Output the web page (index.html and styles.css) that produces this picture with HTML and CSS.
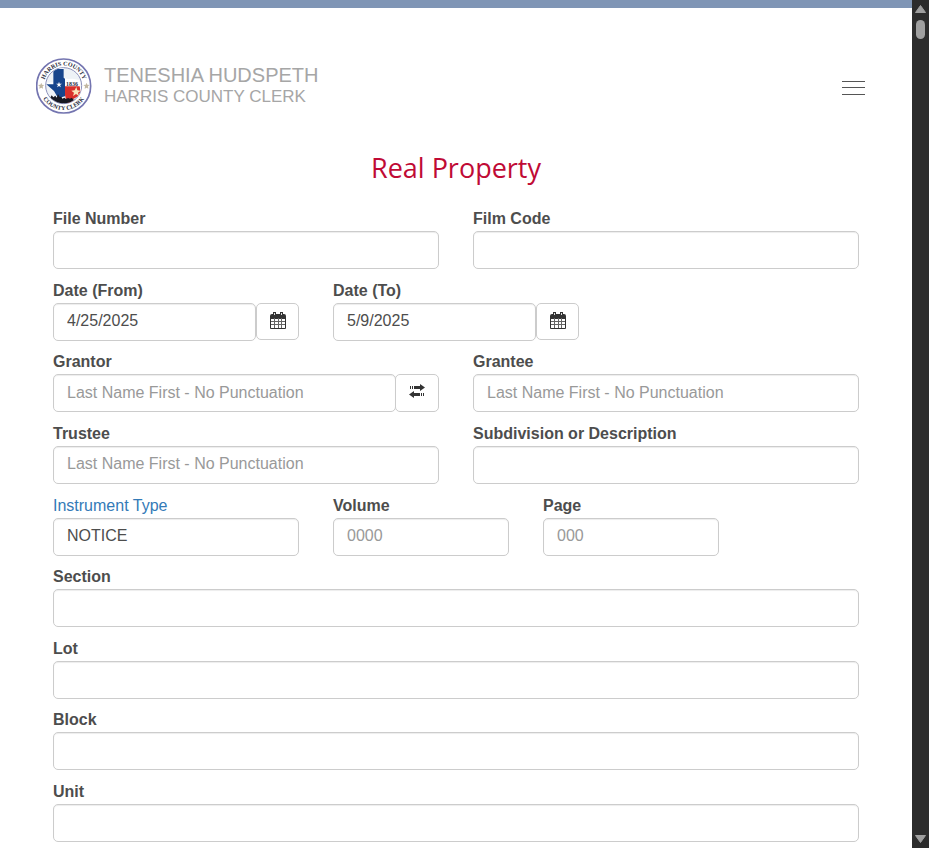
FILE: index.html
```html
<!DOCTYPE html>
<html lang="en">
<head>
<meta charset="utf-8">
<meta name="viewport" content="width=device-width, initial-scale=1">
<title>Real Property</title>
<link rel="stylesheet" href="styles.css">
</head>
<body>
<div class="page">
  <header class="header">
    <a class="brand" href="#">
      <svg class="seal" viewBox="18 25 168 168" aria-hidden="true">
        <defs>
          <path id="arc-top" d="M41 108a60 60 0 0 1 120 0"/>
          <path id="arc-bottom" d="M28 108a73 73 0 0 0 146 0"/>
          <clipPath id="disc"><circle cx="101" cy="108" r="53"/></clipPath>
        </defs>
        <circle cx="101" cy="109" r="81" fill="#fff" stroke="#7475b0" stroke-width="5"/>
        <circle cx="101" cy="108" r="54" fill="#eef2f6" stroke="#8d91bb" stroke-width="3"/>
        <g clip-path="url(#disc)">
          <path d="M70 56h31v28l12 4 14-1 22 4 3 22 2 15-8 9-14 8-8 15-12-6-12-18-10 2-9-5-9-14-22-20 19-1z" fill="#fff"/>
          <path d="M70 58h31v26l4 3v53l-6 1-9 4-9-5-9-16-23-20h21z" fill="#17458c"/>
          <path d="M105 110h44l3 18-8 12-14 8-8 15-12-6-5-20z" fill="#d9302b"/>
          <path d="M45 146l15-1 5-8 5 6 6-5 4 6 4-11 5 9 5-1 3 6 6-3 5 4 6-3 6 2 5-3 6 6 12 1-14 20H60z" fill="#171923"/>
        </g>
        <path d="M87 96l2 6h7l-6 4 3 7-6-4-6 4 3-7-6-4h7z" fill="#fff"/>
        <path d="M139 112l3 10 10 1-8 6 3 10-9-6-9 6 3-10-8-6 10-1z" fill="#fae7bc"/>
        <path d="M34 99l2 6 7 1-5 4 1 7-5-3-6 3 1-7-5-4 7-1zM170 99l2 6 7 1-5 4 1 7-5-3-6 3 1-7-5-4 7-1z" fill="#c2b8a2"/>
        <text class="seal-year" x="126" y="108" text-anchor="middle">1836</text>
        <text class="seal-text"><textPath href="#arc-top" startOffset="50%" text-anchor="middle">HARRIS COUNTY</textPath></text>
        <text class="seal-text"><textPath href="#arc-bottom" startOffset="50%" text-anchor="middle">COUNTY CLERK</textPath></text>
      </svg>
      <span class="brand-text">
        <span class="brand-name">TENESHIA HUDSPETH</span>
        <span class="brand-office">HARRIS COUNTY CLERK</span>
      </span>
    </a>
    <button class="menu" type="button" aria-label="Menu">
      <svg width="23" height="14" viewBox="0 0 23 14"><path d="M0 0h23v1H0zM0 6h23v1H0zM0 13h23v1H0z" fill="#555"/></svg>
    </button>
  </header>

  <main class="main">
    <h1 class="title">Real Property</h1>
    <form class="form">
      <div class="row">
        <div class="field half"><label for="file">File Number</label><input id="file" type="text"></div>
        <div class="field half"><label for="film">Film Code</label><input id="film" type="text"></div>
      </div>
      <div class="row">
        <div class="field third">
          <label for="from">Date (From)</label>
          <div class="group">
            <input id="from" type="text" value="4/25/2025">
            <button class="addon" type="button" aria-label="Choose start date">
              <svg width="16" height="17" viewBox="0 0 16 17"><path d="M0 4q0-2 2-2h12q2 0 2 2v3H0z" fill="#333"/><path d="M3 0h3v4H3zM10 0h3v4h-3z" fill="#333"/><path d="M4 1h1v2H4zM11 1h1v2h-1z" fill="#ddd"/><path d="M.5 6v10.500h15V6" fill="none" stroke="#333"/><path d="M4.500 6v10M8.500 6v10M11.500 6v10M1 9.500h14M1 12.500h14" fill="none" stroke="#666"/></svg>
            </button>
          </div>
        </div>
        <div class="field third">
          <label for="to">Date (To)</label>
          <div class="group">
            <input id="to" type="text" value="5/9/2025">
            <button class="addon" type="button" aria-label="Choose end date">
              <svg width="16" height="17" viewBox="0 0 16 17"><path d="M0 4q0-2 2-2h12q2 0 2 2v3H0z" fill="#333"/><path d="M3 0h3v4H3zM10 0h3v4h-3z" fill="#333"/><path d="M4 1h1v2H4zM11 1h1v2h-1z" fill="#ddd"/><path d="M.5 6v10.500h15V6" fill="none" stroke="#333"/><path d="M4.500 6v10M8.500 6v10M11.500 6v10M1 9.500h14M1 12.500h14" fill="none" stroke="#666"/></svg>
            </button>
          </div>
        </div>
      </div>
      <div class="row">
        <div class="field half">
          <label for="grantor">Grantor</label>
          <div class="group">
            <input id="grantor" type="text" placeholder="Last Name First - No Punctuation">
            <button class="addon swap" type="button" aria-label="Swap grantor and grantee">
              <svg width="16" height="14" viewBox="0 0 16 14"><path d="M5 2h6V0l5 3.500L11 7V5H5zM3 2h1v3H3zM1 2h1v3H1zM11 9H5V7l-5 3.500L5 14v-2h6zM12 9h1v3h-1zM14 9h1v3h-1z" fill="#333"/></svg>
            </button>
          </div>
        </div>
        <div class="field half"><label for="grantee">Grantee</label><input id="grantee" type="text" placeholder="Last Name First - No Punctuation"></div>
      </div>
      <div class="row">
        <div class="field half"><label for="trustee">Trustee</label><input id="trustee" type="text" placeholder="Last Name First - No Punctuation"></div>
        <div class="field half"><label for="subdivision">Subdivision or Description</label><input id="subdivision" type="text"></div>
      </div>
      <div class="row">
        <div class="field third"><a class="link" id="type-label" href="#">Instrument Type</a><input aria-labelledby="type-label" type="text" value="NOTICE"></div>
        <div class="field quarter"><label for="volume">Volume</label><input id="volume" type="text" placeholder="0000"></div>
        <div class="field quarter"><label for="page">Page</label><input id="page" type="text" placeholder="000"></div>
      </div>
      <div class="row"><div class="field full"><label for="section">Section</label><input id="section" type="text"></div></div>
      <div class="row"><div class="field full"><label for="lot">Lot</label><input id="lot" type="text"></div></div>
      <div class="row"><div class="field full"><label for="block">Block</label><input id="block" type="text"></div></div>
      <div class="row"><div class="field full"><label for="unit">Unit</label><input id="unit" type="text"></div></div>
    </form>
  </main>
</div>
<div class="scrollbar" aria-hidden="true">
  <svg width="11" height="8" viewBox="0 0 11 8"><path d="M5.500 0.500L10.500 7.500H.5z" fill="#9f9f9f" stroke="#9f9f9f" stroke-linejoin="round"/></svg>
  <span class="thumb"></span>
  <svg class="down" width="11" height="8" viewBox="0 0 11 8"><path d="M5.500 7.500L.5.500h10z" fill="#9f9f9f" stroke="#9f9f9f" stroke-linejoin="round"/></svg>
</div>
</body>
</html>
```
FILE: styles.css
```css
* {
  box-sizing: border-box;
}

body {
  margin: 0;
  display: flex;
  min-height: 100vh;
  background: #fff;
  color: #4d4d4d;
  font: 16px/22px "Liberation Sans", Arial, sans-serif;
}

.page {
  flex: 1;
  min-width: 0;
  display: flex;
  flex-direction: column;
  border-top: 8px solid #7f95b5;
}

.header {
  display: flex;
  align-items: center;
  justify-content: space-between;
  padding: 50px 47px 0 36px;
}

.brand {
  display: flex;
  gap: 12px;
  color: #a6a6a6;
  text-decoration: none;
}

.seal {
  width: 56px;
  height: 56px;
}

.seal-text,
.seal-year {
  font-family: "Liberation Serif", serif;
  font-weight: bold;
  font-size: 18px;
  fill: #292b3d;
}

.brand-text {
  display: flex;
  flex-direction: column;
  padding-top: 6px;
}

.brand-name {
  font-size: 20px;
  line-height: 22px;
}

.brand-office {
  font-size: 17px;
  line-height: 22px;
}

.menu {
  display: flex;
  padding: 0;
  margin-top: 4px;
  border: 0;
  background: none;
}

.main {
  flex: 1;
  display: flex;
  flex-direction: column;
  padding: 36px 53px 6px;
}

.title {
  margin: 0 0 22px;
  text-align: center;
  color: #c00a35;
  font: 27px/36px "Open Sans", sans-serif;
}

.form {
  flex: 1;
  display: flex;
  flex-direction: column;
  justify-content: space-between;
  gap: 10px;
}

.row {
  display: grid;
  grid-template-columns: repeat(12, minmax(0, 1fr));
  column-gap: 34px;
}

.field {
  display: flex;
  flex-direction: column;
  gap: 1px;
}

.full {
  grid-column: span 12;
}

.half {
  grid-column: span 6;
}

.third {
  grid-column: span 4;
}

.quarter {
  grid-column: span 3;
}

label {
  font-weight: bold;
}

.link {
  color: #337ab7;
  text-decoration: none;
}

input {
  width: 100%;
  min-width: 0;
  height: 38px;
  padding: 0 13px 1px;
  border: 1px solid #ccc;
  border-radius: 5px;
  background: #fff;
  box-shadow: inset 0 1px 1px #00000013;
  color: #4d4d4d;
  font: inherit;
}

input::placeholder {
  color: #999;
  opacity: 1;
}

.group {
  display: flex;
  align-items: center;
}

.group input {
  flex: 1;
}

.addon {
  display: flex;
  align-items: center;
  justify-content: center;
  width: 43px;
  height: 37px;
  padding: 0 0 2px;
  border: 1px solid #ccc;
  border-radius: 5px;
  background: #fff;
}

.swap {
  width: 44px;
  height: 38px;
  margin-left: -1px;
  padding-bottom: 4px;
}

.scrollbar {
  position: sticky;
  top: 0;
  display: flex;
  flex-direction: column;
  align-items: center;
  width: 17px;
  height: 100vh;
  padding: 5px 0;
  background: #2c2c2c;
}

.thumb {
  width: 9px;
  height: 19px;
  margin-top: 7px;
  border-radius: 5px;
  background: #9f9f9f;
}

.down {
  margin-top: auto;
}
```
